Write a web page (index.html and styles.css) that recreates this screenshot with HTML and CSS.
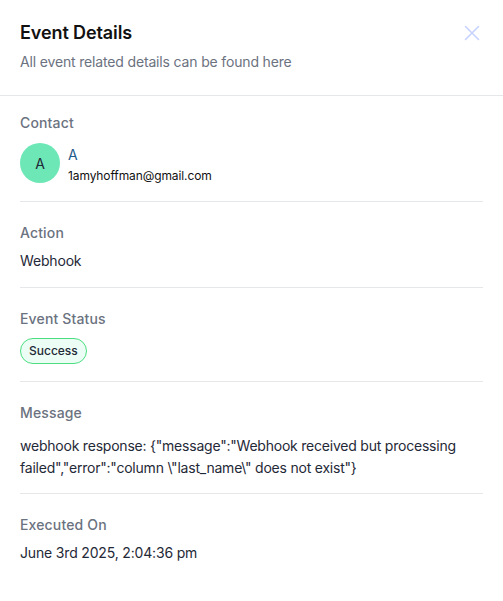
FILE: index.html
```html
<!DOCTYPE html>
<html>
<head>
<meta charset="utf-8">
<link rel="stylesheet" href="styles.css">
</head>
<body>
<div class="panel">
  <header class="header">
    <div class="header-text">
      <h1 class="title">Event Details</h1>
      <p class="subtitle">All event related details can be found here</p>
    </div>
    <button class="close" aria-label="Close">
      <svg width="16" height="16" viewBox="0 0 16 16" fill="none" stroke="#c7d2fe" stroke-width="1.6" stroke-linecap="round"><path d="M1.5 1.5L14.5 14.5M14.5 1.5L1.5 14.5"/></svg>
    </button>
  </header>
  <div class="body">
    <section class="section first">
      <div class="label">Contact</div>
      <div class="contact">
        <div class="avatar">A</div>
        <div class="contact-info">
          <div class="contact-name">A</div>
          <div class="contact-email">1amyhoffman@gmail.com</div>
        </div>
      </div>
    </section>
    <section class="section">
      <div class="label">Action</div>
      <div class="value">Webhook</div>
    </section>
    <section class="section status">
      <div class="label">Event Status</div>
      <div class="badge-row"><span class="badge">Success</span></div>
    </section>
    <section class="section msg">
      <div class="label">Message</div>
      <div class="value message">webhook response: {"message":"Webhook received but processing failed","error":"column \"last_name\" does not exist"}</div>
    </section>
    <section class="section last">
      <div class="label">Executed On</div>
      <div class="value">June 3rd 2025, 2:04:36 pm</div>
    </section>
  </div>
</div>
</body>
</html>
```
FILE: styles.css
```css
* { box-sizing: border-box; }
html, body { margin: 0; padding: 0; background: #fff; }
body { font-family: Inter, "Noto Sans", sans-serif; color: #1f2937; }
.panel { width: 503px; }
.header {
  display: flex;
  justify-content: space-between;
  align-items: flex-start;
  padding: 19px 20px 23px 20px;
  border-bottom: 1px solid #e5e7eb;
}
.title { margin: 0; font-size: 18px; line-height: 28px; font-weight: 600; color: #111; letter-spacing: -0.1px; }
.subtitle { margin: 5px 0 0; font-size: 14px; line-height: 20px; color: #6b7280; letter-spacing: -0.16px; }
.close {
  background: none; border: 0; padding: 0; margin: 6px 3px 0 0;
  width: 16px; height: 16px; display: flex; cursor: pointer;
}
.body { padding: 0 20px; }
.section {
  padding: 21px 0 16px;
  border-bottom: 1px solid #e5e7eb;
  display: flex; flex-direction: column; gap: 8px;
}
.section.first { padding-top: 17px; padding-bottom: 15px; gap: 10px; }
.section.status { padding-bottom: 17px; }
.section.msg { padding-bottom: 14px; }
.section.last { border-bottom: 0; }
.label { font-size: 14px; line-height: 20px; font-weight: 500; color: #6b7280; letter-spacing: 0.15px; }
.value { font-size: 14px; line-height: 20px; color: #1f2937; letter-spacing: -0.17px; }
.message { line-height: 22px; margin-top: 4px; letter-spacing: -0.22px; }
.contact { display: flex; align-items: flex-start; gap: 8px; }
.avatar {
  width: 40px; height: 40px; border-radius: 50%; flex: none;
  background: #6ee7b7; color: #1f2937;
  display: flex; align-items: center; justify-content: center;
  font-size: 14px;
}
.contact-info { display: flex; flex-direction: column; gap: 1px; padding-top: 2px; }
.contact-name { font-size: 14px; line-height: 20px; color: #1e5b8c; }
.contact-email { font-size: 12px; line-height: 20px; color: #111; letter-spacing: -0.1px; }
.badge-row { display: flex; padding-top: 1px; }
.badge {
  display: inline-block;
  font-size: 12px; line-height: 16px; font-weight: 500;
  padding: 4px 8px;
  border: 1px solid #4ade80;
  background: #ecfdf5;
  border-radius: 999px;
  color: #1f2937;
}
```
